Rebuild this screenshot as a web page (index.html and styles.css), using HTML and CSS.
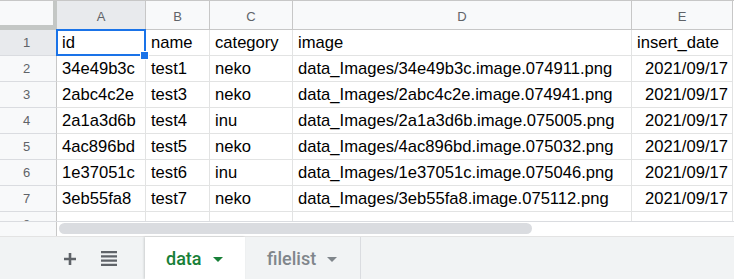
FILE: index.html
```html
<!DOCTYPE html>
<html>
<head>
<meta charset="utf-8">
<link rel="stylesheet" href="styles.css">
</head>
<body>
<div class="sheet">
  <div class="grid">
    <div class="corner"></div>
    <div class="colhdr sel">A</div>
    <div class="colhdr">B</div>
    <div class="colhdr">C</div>
    <div class="colhdr">D</div>
    <div class="colhdr">E</div>

    <div class="rowhdr sel">1</div>
    <div class="cell active">id</div>
    <div class="cell">name</div>
    <div class="cell">category</div>
    <div class="cell">image</div>
    <div class="cell">insert_date</div>

    <div class="rowhdr">2</div>
    <div class="cell">34e49b3c</div>
    <div class="cell">test1</div>
    <div class="cell">neko</div>
    <div class="cell">data_Images/34e49b3c.image.074911.png</div>
    <div class="cell num">2021/09/17</div>

    <div class="rowhdr">3</div>
    <div class="cell">2abc4c2e</div>
    <div class="cell">test3</div>
    <div class="cell">neko</div>
    <div class="cell">data_Images/2abc4c2e.image.074941.png</div>
    <div class="cell num">2021/09/17</div>

    <div class="rowhdr">4</div>
    <div class="cell">2a1a3d6b</div>
    <div class="cell">test4</div>
    <div class="cell">inu</div>
    <div class="cell">data_Images/2a1a3d6b.image.075005.png</div>
    <div class="cell num">2021/09/17</div>

    <div class="rowhdr">5</div>
    <div class="cell">4ac896bd</div>
    <div class="cell">test5</div>
    <div class="cell">neko</div>
    <div class="cell">data_Images/4ac896bd.image.075032.png</div>
    <div class="cell num">2021/09/17</div>

    <div class="rowhdr">6</div>
    <div class="cell">1e37051c</div>
    <div class="cell">test6</div>
    <div class="cell">inu</div>
    <div class="cell">data_Images/1e37051c.image.075046.png</div>
    <div class="cell num">2021/09/17</div>

    <div class="rowhdr">7</div>
    <div class="cell">3eb55fa8</div>
    <div class="cell">test7</div>
    <div class="cell">neko</div>
    <div class="cell">data_Images/3eb55fa8.image.075112.png</div>
    <div class="cell num">2021/09/17</div>

    <div class="rowhdr">8</div>
    <div class="cell"></div>
    <div class="cell"></div>
    <div class="cell"></div>
    <div class="cell"></div>
    <div class="cell"></div>
  </div>
  <div class="hscroll">
    <div class="hscroll-gutter"></div>
    <div class="hscroll-track"><div class="thumb"></div></div>
  </div>
</div>
<div class="tabbar">
  <div class="tool plus">
    <svg width="14" height="14" viewBox="0 0 14 14"><path d="M7 1v12M1 7h12" stroke="#5f6368" stroke-width="2.6" fill="none"/></svg>
  </div>
  <div class="tool list">
    <svg width="16" height="15" viewBox="0 0 16 15"><path d="M0 1.2h16M0 5.4h16M0 9.6h16M0 13.8h16" stroke="#5f6368" stroke-width="2.3" fill="none"/></svg>
  </div>
  <div class="tab active"><span>data</span><span class="caret"></span></div>
  <div class="tab"><span>filelist</span><span class="caret"></span></div>
</div>
</body>
</html>
```
FILE: styles.css
```css
* { box-sizing: border-box; }
html, body { margin: 0; padding: 0; }
body {
  width: 734px;
  height: 279px;
  overflow: hidden;
  background: #fff;
  font-family: "Liberation Sans", Arial, sans-serif;
}
.sheet {
  height: 236px;
  border-top: 1px solid #c7c7c7;
  overflow: hidden;
}
.grid {
  display: grid;
  grid-template-columns: 57px 89px 64px 83px 339px 101px;
  grid-template-rows: 29px repeat(8, 26px);
  height: 220px;
  overflow: hidden;
}
.corner {
  background: #f8f9fa;
  border-right: 4px solid #c4c7c5;
  border-bottom: 5px solid #c4c7c5;
}
.colhdr {
  background: #f8f9fa;
  border-right: 1px solid #c7c7c7;
  border-bottom: 1px solid #c7c7c7;
  color: #5f6368;
  font-size: 13px;
  display: flex;
  align-items: center;
  justify-content: center;
  padding-top: 2px;
}
.colhdr.sel, .rowhdr.sel { background: #e8eaed; }
.rowhdr {
  background: #f8f9fa;
  border-right: 1px solid #c7c7c7;
  border-bottom: 1px solid #dadce0;
  color: #5f6368;
  font-size: 13px;
  display: flex;
  align-items: center;
  justify-content: center;
  padding-right: 3px;
}
.cell {
  border-right: 1px solid #e2e3e3;
  border-bottom: 1px solid #e2e3e3;
  font-size: 16.6px;
  color: #000;
  display: flex;
  align-items: flex-end;
  padding: 0 4px 2px 5px;
  white-space: nowrap;
  overflow: hidden;
}
.cell.num { justify-content: flex-end; }
.cell.active { position: relative; overflow: visible; }
.cell.active::before {
  content: "";
  position: absolute;
  left: -1px; top: -1px; right: -1px; bottom: -1px;
  border: 2px solid #1a73e8;
  pointer-events: none;
}
.cell.active::after {
  content: "";
  position: absolute;
  right: -3px; bottom: -4px;
  width: 7px; height: 7px;
  background: #1a73e8;
  outline: 1px solid #fff;
  z-index: 2;
}
.hscroll {
  display: flex;
  height: 16px;
  border-top: 1px solid #dadce0;
}
.hscroll-gutter {
  width: 57px;
  background: #f8f9fa;
  border-right: 1px solid #c7c7c7;
}
.hscroll-track {
  flex: 1;
  padding: 1px 2px 0 2px;
}
.thumb {
  width: 473px;
  height: 11px;
  border-radius: 6px;
  background: #dadce0;
}
.tabbar {
  height: 43px;
  background: #f1f3f4;
  border-top: 1px solid #e3e3e3;
  display: flex;
  align-items: stretch;
}
.tool {
  display: flex;
  align-items: center;
  justify-content: center;
}
.tool.plus { width: 28px; margin-left: 56px; padding-top: 1px; }
.tool.list { width: 20px; margin-left: 15px; margin-right: 26px; padding-top: 1px; }
.tab {
  display: flex;
  align-items: center;
  font-family: Roboto, "Liberation Sans", sans-serif;
  font-weight: 500;
  font-size: 18px;
  color: #80868b;
  padding: 0 20px 0 22px;
  gap: 11px;
  border-right: 1px solid #dadce0;
}
.tab.active {
  background: #fff;
  color: #188038;
  width: 100px;
  padding-left: 21px;
  box-shadow: -1px 0 2px rgba(60,64,67,0.2);
  border-right: none;
}
.tab:not(.active) { width: 116px; }
.caret {
  width: 0; height: 0;
  border-left: 5px solid transparent;
  border-right: 5px solid transparent;
  border-top: 5px solid currentColor;
  margin-top: 2px;
}
```
